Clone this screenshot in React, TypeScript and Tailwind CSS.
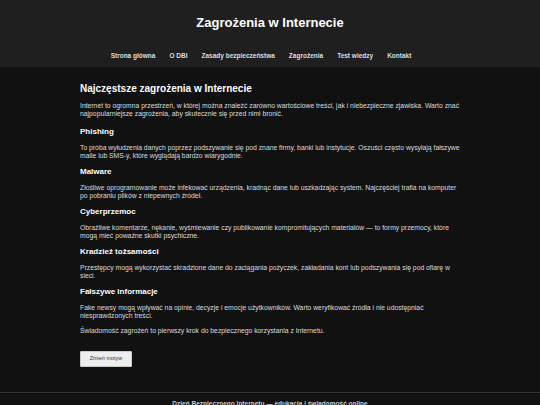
const navItems = ['Strona główna', 'O DBI', 'Zasady bezpieczeństwa', 'Zagrożenia', 'Test wiedzy', 'Kontakt'];

const threats = [
  {
    title: 'Phishing',
    text: 'To próba wyłudzenia danych poprzez podszywanie się pod znane firmy, banki lub instytucje. Oszuści często wysyłają fałszywe maile lub SMS-y, które wyglądają bardzo wiarygodnie.',
  },
  {
    title: 'Malware',
    text: 'Złośliwe oprogramowanie może infekować urządzenia, kradnąc dane lub uszkadzając system. Najczęściej trafia na komputer po pobraniu plików z niepewnych źródeł.',
  },
  {
    title: 'Cyberprzemoc',
    text: 'Obraźliwe komentarze, nękanie, wyśmiewanie czy publikowanie kompromitujących materiałów — to formy przemocy, które mogą mieć poważne skutki psychiczne.',
  },
  {
    title: 'Kradzież tożsamości',
    text: 'Przestępcy mogą wykorzystać skradzione dane do zaciągania pożyczek, zakładania kont lub podszywania się pod ofiarę w sieci.',
  },
  {
    title: 'Fałszywe informacje',
    text: 'Fake newsy mogą wpływać na opinie, decyzje i emocje użytkowników. Warto weryfikować źródła i nie udostępniać niesprawdzonych treści.',
  },
];

export default function App() {
  return (
    <div className="min-h-screen bg-[#111111] text-[#dddddd] font-['Liberation_Sans',Arial,sans-serif]">
      <header className="bg-[#1f1f1f] pt-[15px] pb-[7px] text-center">
        <h1 className="text-[13px] leading-[16px] font-bold text-white">Zagrożenia w Internecie</h1>
        <nav className="mt-[21px] flex justify-center gap-[14px] pr-[18px]">
          {navItems.map((item) => (
            <a key={item} href="#" className="text-[6.5px] leading-[8px] font-bold text-[#dddddd]">
              {item}
            </a>
          ))}
        </nav>
      </header>

      <main className="ml-[80px] w-[384px] pt-[16px] pb-[25px]">
        <h2 className="text-[10px] leading-[12px] font-bold text-white">Najczęstsze zagrożenia w Internecie</h2>
        <p className="mt-[6.5px] mb-[8.5px] text-[6.8px] leading-[8.5px]">
          Internet to ogromna przestrzeń, w której można znaleźć zarówno wartościowe treści, jak i niebezpieczne zjawiska. Warto znać najpopularniejsze zagrożenia, aby skutecznie się przed nimi bronić.
        </p>

        {threats.map((t, i) => (
          <section key={t.title} className={i === 0 ? '' : 'mt-[6.5px]'}>
            <h3 className="text-[8px] leading-[10px] font-bold text-white">{t.title}</h3>
            <p className="mt-[6.5px] text-[6.8px] leading-[8.5px]">{t.text}</p>
          </section>
        ))}

        <p className="mt-[6.5px] text-[6.8px] leading-[8.5px]">
          Świadomość zagrożeń to pierwszy krok do bezpiecznego korzystania z Internetu.
        </p>

        <button
          type="button"
          className="mt-[15px] h-[16px] w-[52px] rounded-[1px] border border-[#cccccc] bg-[#eeeeee] text-[5.5px] text-[#333333]"
        >
          Zmień motyw
        </button>
      </main>

      <footer className="border-t border-[#333333] pt-[7px] pb-[7px] text-center">
        <p className="text-[6.5px] leading-[8px] font-bold text-[#cccccc]">
          Dzień Bezpiecznego Internetu — edukacja i świadomość online
        </p>
      </footer>
    </div>
  );
}
